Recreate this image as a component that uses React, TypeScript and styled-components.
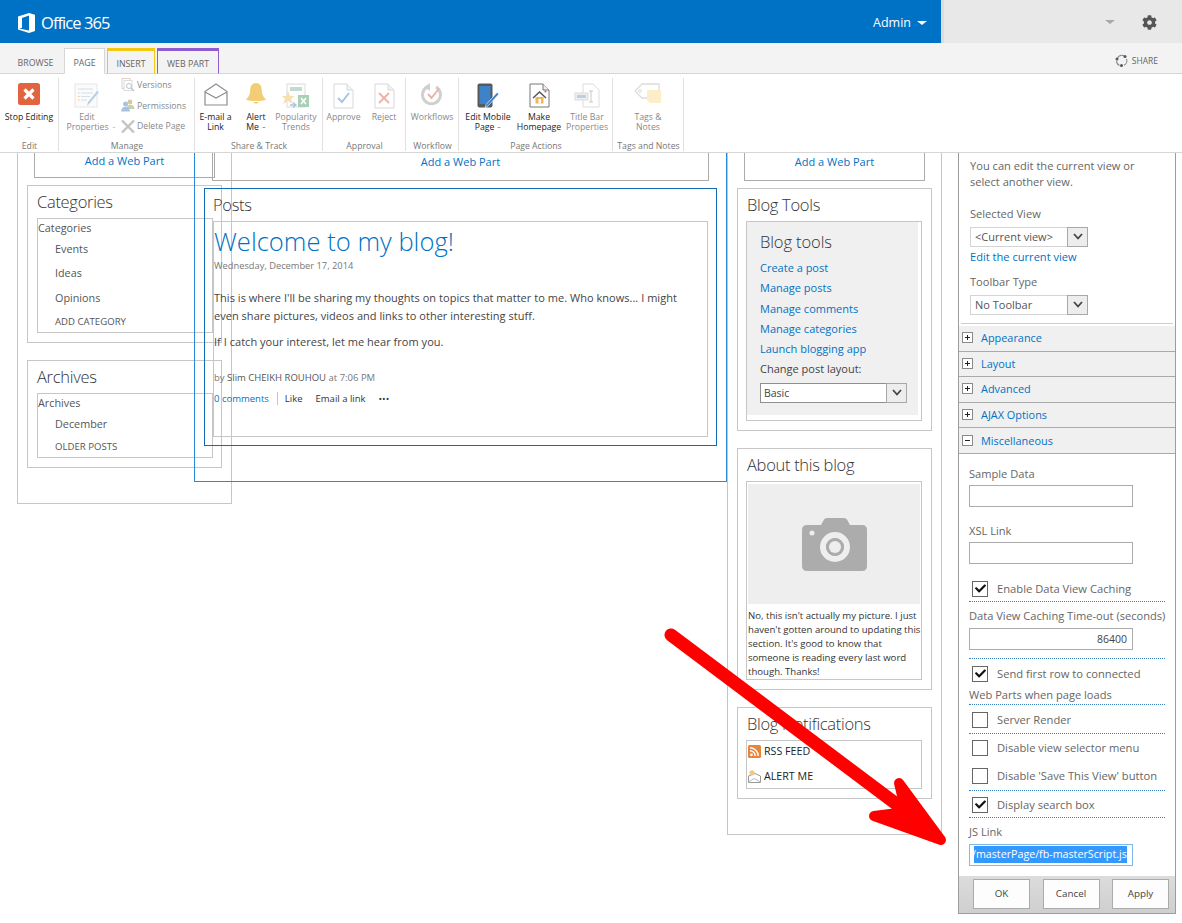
import React from "react";
import styled, { createGlobalStyle } from "styled-components";
import { FaCheck, FaCog } from "react-icons/fa";

const GlobalStyle = createGlobalStyle`
  html, body { margin: 0; padding: 0; background: #fff; }
  body { font-family: "Open Sans", "Noto Sans", "Liberation Sans", sans-serif; color: #444; }
  * { box-sizing: border-box; }
`;

const Screen = styled.div`
  position: relative;
  width: 1182px;
  height: 923px;
  overflow: hidden;
  background: #fff;
`;

/* suite bar */
const SuiteBar = styled.div`
  display: flex;
  height: 43px;
  background: #e8e8e8;
`;
const BrandArea = styled.div`
  width: 941px;
  display: flex;
  align-items: center;
  background: #0072c6;
  color: #fff;
  padding: 2px 0 0 18px;
`;
const BrandName = styled.span`
  margin-left: 6px;
  font-size: 16.5px;
  letter-spacing: -0.95px;
  font-weight: 400;
`;
const AdminName = styled.span`
  margin-left: auto;
  font-size: 12.5px;
  display: flex;
  align-items: center;
  gap: 6px;
  margin-right: 14px;
`;
const Caret = styled.i<{ $c: string; $w: number }>`
  display: block;
  width: 0;
  height: 0;
  border-left: ${(p) => p.$w}px solid transparent;
  border-right: ${(p) => p.$w}px solid transparent;
  border-top: ${(p) => p.$w - 1}px solid ${(p) => p.$c};
`;
const LabelCaret = styled(Caret)<{ $hang?: boolean }>`
  display: inline-block;
  margin-left: 3px;
  margin-right: ${(p) => (p.$hang ? -8 : 0)}px;
  vertical-align: middle;
`;
const BarStrip = styled.div`
  width: 3px;
  background: #dcdcdc;
`;
const SuiteRight = styled.div`
  flex: 1;
  display: flex;
  align-items: center;
  padding: 1px 0 0 161px;
  gap: 27px;
  color: #555;
`;

/* tabs */
const TabRow = styled.div`
  display: flex;
  align-items: flex-end;
  height: 31px;
  background: #f3f3f3;
  border-bottom: 1px solid #d6d6d6;
  padding-left: 12px;
  position: relative;
`;
const Tab = styled.div<{ $w: number; $accent?: string; $active?: boolean; $gap: number }>`
  width: ${(p) => p.$w}px;
  height: 26px;
  margin-right: ${(p) => p.$gap}px;
  margin-bottom: -1px;
  display: flex;
  align-items: center;
  justify-content: center;
  font-size: 8.8px;
  color: #666;
  padding-top: 3px;
  background: ${(p) => (p.$active ? "#fff" : "transparent")};
  border: 1px solid ${(p) => p.$accent ?? (p.$active ? "#d6d6d6" : "transparent")};
  border-top-width: ${(p) => (p.$accent ? 3 : 1)}px;
  border-bottom: ${(p) => (p.$active ? "1px solid #fff" : "1px solid #d6d6d6")};
`;
const ShareAction = styled.div`
  margin-left: auto;
  margin-right: 24px;
  height: 30px;
  display: flex;
  align-items: center;
  gap: 4px;
  padding-top: 5px;
  font-size: 8.5px;
  color: #666;
`;

/* ribbon */
const Ribbon = styled.div`
  display: flex;
  height: 79px;
  background: #fff;
  border-bottom: 1px solid #d6d6d6;
`;
const Group = styled.div<{ $w: number }>`
  width: ${(p) => p.$w}px;
  display: flex;
  flex-direction: column;
  position: relative;
  &::after {
    content: "";
    position: absolute;
    right: 0;
    top: 4px;
    bottom: 1px;
    width: 1px;
    background: #e1e1e1;
  }
`;
const GroupBody = styled.div`
  flex: 1;
  display: flex;
  min-height: 0;
`;
const Caption = styled.div`
  height: 12px;
  line-height: 12px;
  text-align: center;
  font-size: 8.7px;
  color: #777;
`;
const LargeButton = styled.div<{ $w: number; $off?: boolean }>`
  width: ${(p) => p.$w}px;
  flex: none;
  display: flex;
  flex-direction: column;
  align-items: center;
  padding-top: 9px;
  font-size: 8.7px;
  line-height: 9.5px;
  text-align: center;
  white-space: nowrap;
  color: ${(p) => (p.$off ? "#888" : "#222")};
`;
const IconSlot = styled.div`
  height: 30px;
  display: flex;
  align-items: flex-start;
  justify-content: center;
`;
const SmallStack = styled.div`
  margin-left: 6px;
  padding-top: 1px;
  display: flex;
  flex-direction: column;
`;
const SmallButton = styled.div`
  height: 20.5px;
  display: flex;
  align-items: center;
  gap: 2px;
  font-size: 8.7px;
  color: #888;
  white-space: nowrap;
`;

/* page */
const Workspace = styled.div`
  display: flex;
  align-items: flex-start;
  padding-left: 17px;
  height: 770px;
`;
const Zone = styled.div<{ $w: number; $line: string; $ml: number }>`
  width: ${(p) => p.$w}px;
  margin-left: ${(p) => p.$ml}px;
  flex: none;
  border: 1px solid ${(p) => p.$line};
  border-top: 0;
  padding-bottom: 35px;
`;
const AddPart = styled.div<{ $w: number; $ml: number; $h: number }>`
  width: ${(p) => p.$w}px;
  height: ${(p) => p.$h}px;
  margin-left: ${(p) => p.$ml}px;
  border: 1px solid #ababab;
  border-top: 0;
  text-align: center;
  font-size: 11px;
  line-height: ${(p) => p.$h - 10}px;
  color: #0072c6;
`;
const WebPart = styled.div<{ $mt: number; $ml: number }>`
  width: 195px;
  margin: ${(p) => p.$mt}px 0 0 ${(p) => p.$ml}px;
  border: 1px solid #c6c6c6;
  padding: 0 8px 9px 9px;
`;
const PartTitle = styled.div`
  height: 32px;
  line-height: 32px;
  font-size: 16.5px;
  letter-spacing: -0.3px;
  font-weight: 300;
  color: #333;
  white-space: nowrap;
`;
const PartBody = styled.div<{ $h?: number; $ml?: number }>`
  width: 176px;
  margin-left: ${(p) => p.$ml ?? 0}px;
  height: ${(p) => (p.$h ? `${p.$h}px` : "auto")};
  border: 1px solid #c6c6c6;
`;
const TreeRow = styled.div<{ $h: number; $indent?: boolean; $small?: boolean }>`
  height: ${(p) => p.$h}px;
  line-height: ${(p) => p.$h}px;
  padding-left: ${(p) => (p.$indent ? 17 : 0)}px;
  font-size: ${(p) => (p.$small ? 9.6 : 10.8)}px;
  color: #555;
  white-space: nowrap;
`;
const PostsPart = styled.div`
  width: 513px;
  margin: 7px 0 0 9px;
  border: 1px solid #0f6cb5;
  padding: 0 8px 8px;
`;
const PostBody = styled.div`
  width: 495px;
  height: 216px;
  border: 1px solid #c6c6c6;
`;
const PostTitle = styled.div`
  margin-top: 1px;
  height: 37px;
  line-height: 37px;
  font-size: 25.6px;
  font-weight: 300;
  color: #0072c6;
`;
const PostDate = styled.div`
  height: 12px;
  line-height: 12px;
  font-size: 9.3px;
  color: #777;
`;
const PostText = styled.p<{ $mt: number }>`
  margin: ${(p) => p.$mt}px 0 0;
  font-size: 11px;
  letter-spacing: 0.03px;
  line-height: 18px;
  color: #444;
  white-space: nowrap;
`;
const PostBy = styled.div`
  margin-top: 20px;
  line-height: 14px;
  font-size: 9.5px;
  color: #777;
`;
const NameLink = styled.span`
  color: #555;
`;
const PostActions = styled.div`
  margin-top: 5px;
  height: 16px;
  display: flex;
  align-items: center;
  font-size: 9.5px;
  color: #333;
`;
const CommentLink = styled.span`
  color: #0072c6;
  padding-right: 8px;
  margin-right: 7px;
  border-right: 1px solid #c6c6c6;
`;
const ActionLink = styled.span<{ $ml?: number }>`
  margin-left: ${(p) => p.$ml ?? 0}px;
`;

const ToolsBox = styled.div`
  height: 193px;
  margin-right: 3px;
  background: #f0f0f0;
  padding: 0 0 0 13px;
`;
const ToolsTitle = styled.div`
  height: 36px;
  line-height: 40px;
  font-size: 16.5px;
  letter-spacing: -0.1px;
  font-weight: 300;
  color: #333;
`;
const ToolLink = styled.div<{ $dark?: boolean }>`
  height: 20.3px;
  line-height: 20px;
  font-size: 11px;
  color: ${(p) => (p.$dark ? "#444" : "#0072c6")};
`;
const ToolSelect = styled.div`
  margin-top: 3px;
  width: 147px;
  height: 20px;
  display: flex;
  align-items: center;
  background: #fff;
  border: 1px solid #909090;
  padding-left: 3px;
  font-size: 10.5px;
  color: #444;
`;
const SelectValue = styled.span`
  flex: 1;
`;
const PictureBox = styled.div`
  margin: 2px 1px 5px;
  width: 172px;
  height: 120px;
  background: #eee;
  display: flex;
  align-items: center;
  justify-content: center;
`;
const PictureText = styled.div`
  padding-left: 1px;
  font-size: 9.6px;
  line-height: 14px;
  color: #333;
  white-space: nowrap;
`;
const NoticeRow = styled.div<{ $mt: number }>`
  display: flex;
  align-items: center;
  gap: 3px;
  height: 20px;
  margin-top: ${(p) => p.$mt}px;
  padding-left: 1px;
  font-size: 10.7px;
  color: #222;
`;
const NoticeList = styled.div`
  padding-bottom: 2px;
`;

/* tool pane */
const ToolPane = styled.div`
  width: 218px;
  margin-left: 16px;
  flex: none;
  border: 1px solid #9c9c9c;
  border-top: 0;
  background: #fff;
`;
const PaneIntro = styled.div`
  padding: 5px 0 0 11px;
`;
const PaneLine = styled.div<{ $mt?: number; $ml?: number; $link?: boolean }>`
  margin-top: ${(p) => p.$mt ?? 0}px;
  margin-left: ${(p) => p.$ml ?? 0}px;
  height: 16px;
  line-height: 16px;
  font-size: 11.1px;
  color: ${(p) => (p.$link ? "#0072c6" : "#666")};
  white-space: nowrap;
`;
const PaneSelect = styled.div<{ $mt: number }>`
  margin-top: ${(p) => p.$mt}px;
  width: 118px;
  height: 20px;
  display: flex;
  align-items: center;
  justify-content: space-between;
  padding: 0 0 1px 4px;
  border: 1px solid #d4d4d4;
  font-size: 11px;
  color: #555;
`;
const SelectButton = styled.span`
  width: 21px;
  height: 20px;
  margin: -1px -1px -1px 0;
  display: flex;
  align-items: center;
  justify-content: center;
  background: #ededed;
  border: 1px solid #a8a8a8;
`;
const PaneRule = styled.div`
  margin: 8px 2px 2px;
  height: 1px;
  background: #cfcfcf;
`;
const SectionRow = styled.div`
  height: 25.6px;
  display: flex;
  align-items: center;
  padding: 0 0 1px 3px;
  gap: 8px;
  background: #f0f0f0;
  border-bottom: 1px solid #a9a9a9;
  font-size: 10.9px;
  color: #0072c6;
`;
const ToggleBox = styled.span`
  width: 11px;
  height: 11px;
  border: 1px solid #8a8a8a;
  background: #fff;
  position: relative;
  &::before {
    content: "";
    position: absolute;
    left: 2px;
    right: 2px;
    top: 4px;
    height: 1px;
    background: #222;
  }
`;
const PlusBox = styled(ToggleBox)`
  &::after {
    content: "";
    position: absolute;
    top: 2px;
    bottom: 2px;
    left: 4px;
    width: 1px;
    background: #222;
  }
`;
const PaneForm = styled.div`
  padding-left: 10px;
`;
const TextField = styled.div<{ $mt: number }>`
  margin-top: ${(p) => p.$mt}px;
  width: 164px;
  height: 22px;
  border: 1px solid #ababab;
  text-align: right;
  padding-right: 5px;
  font-size: 10.5px;
  line-height: 20px;
  color: #444;
`;
const CheckRow = styled.div<{ $mt: number }>`
  margin: ${(p) => p.$mt}px 0 0 3px;
  height: 16px;
  display: flex;
  align-items: center;
  gap: 9px;
  font-size: 11.2px;
  color: #666;
  white-space: nowrap;
`;
const CheckBox = styled.span`
  flex: none;
  width: 16px;
  height: 16px;
  border: 1px solid #666;
  display: flex;
  align-items: center;
  justify-content: center;
  color: #111;
`;
const Dotted = styled.div<{ $mt: number }>`
  margin-top: ${(p) => p.$mt}px;
  width: 196px;
  border-top: 1px dotted #3a7fc0;
`;
const LinkField = styled.div`
  margin-top: 4px;
  width: 164px;
  height: 22px;
  border: 1px solid #7db9ea;
  padding: 1px 0 0 4px;
`;
const SelectedText = styled.span`
  display: block;
  width: 153px;
  height: 17px;
  line-height: 17px;
  overflow: hidden;
  white-space: nowrap;
  text-indent: -2px;
  background: #3399ff;
  color: #fff;
  font-size: 10.7px;
`;
const PaneFooter = styled.div`
  margin-top: 10px;
  height: 37px;
  display: flex;
  gap: 12.5px;
  padding: 3px 0 0 14px;
  background: linear-gradient(#dcdcdc, #cfcfcf);
`;
const FooterButton = styled.div`
  width: 57px;
  height: 30px;
  display: flex;
  align-items: center;
  justify-content: center;
  background: #fdfdfd;
  border: 1px solid #ababab;
  font-size: 9.8px;
  color: #444;
`;

const ArrowLayer = styled.svg`
  position: absolute;
  left: 0;
  top: 0;
  pointer-events: none;
`;

const Chevron = () => (
  <svg width="10" height="7" viewBox="0 0 10 7">
    <path d="M1 1 L5 5.5 L9 1" fill="none" stroke="#444" strokeWidth="1.8" />
  </svg>
);

const OfficeLogo = () => (
  <svg width="17" height="20" viewBox="0 0 17 20">
    <path
      fillRule="evenodd"
      fill="#fff"
      d="M0 3.6 L11 0 L17 1.7 V18 L11 20 L0 16.4 Z M4 5 V14.8 L1.2 15.6 L11 17.6 V2.6 Z"
    />
  </svg>
);

const ShareIcon = () => (
  <svg width="13" height="13" viewBox="0 0 13 13">
    <path d="M2.5 4 A5 5 0 0 1 9 1.8 M11.5 5 A5 5 0 0 1 9 11.3 M4.5 11.6 A5 5 0 0 1 1.6 7" fill="none" stroke="#8a8a8a" strokeWidth="1.1" />
    <circle cx="10" cy="2.6" r="1.5" fill="#555" />
    <circle cx="2" cy="5" r="1.5" fill="#555" />
    <circle cx="6.5" cy="11.5" r="1.5" fill="#555" />
  </svg>
);

const StopIcon = () => (
  <svg width="22" height="22" viewBox="0 0 22 22">
    <rect width="22" height="22" rx="2.5" fill="#e2633f" />
    <path d="M6.5 6.5 L15.5 15.5 M15.5 6.5 L6.5 15.5" stroke="#fff" strokeWidth="3.2" />
  </svg>
);

const PropsIcon = () => (
  <svg width="27" height="26" viewBox="0 0 27 26">
    <rect x="1" y="1" width="22" height="23" fill="#fbfbfb" stroke="#e6e6e6" />
    <path d="M4 6 H19 M7 10 H19 M7 13.5 H16 M7 17 H13" stroke="#d6dee6" strokeWidth="1.2" />
    <path d="M4 10 H5.5 M4 13.5 H5.5 M4 17 H5.5" stroke="#e8c98f" strokeWidth="1.2" />
    <path d="M25 9 L16 20 L13 23 L14 19 L23 8 Z" fill="#b8d0e8" />
  </svg>
);

const VersionsIcon = () => (
  <svg width="14" height="14" viewBox="0 0 14 14">
    <rect x="1" y="0.5" width="8" height="10" fill="#fff" stroke="#e6cfc4" />
    <rect x="3" y="2.5" width="8" height="10" fill="#fff" stroke="#dcdcdc" />
    <circle cx="8" cy="8" r="2.5" fill="none" stroke="#b5c5d2" />
    <path d="M10 10 L13 13" stroke="#b5c5d2" strokeWidth="1.3" />
  </svg>
);

const PeopleIcon = () => (
  <svg width="14" height="13" viewBox="0 0 14 13">
    <circle cx="9" cy="3" r="2.4" fill="#d6c9a2" />
    <path d="M5.5 10 Q6 5.8 9 5.8 Q13 5.8 13.5 10 Z" fill="#c8d2a8" />
    <circle cx="4.6" cy="5" r="2.5" fill="#a8c3e0" />
    <path d="M0 12.5 Q.5 7.8 4.6 7.8 Q8.5 7.8 9 12.5 Z" fill="#a8c3e0" />
  </svg>
);

const DeleteIcon = () => (
  <svg width="14" height="13" viewBox="0 0 14 13">
    <path d="M1 0.5 L13 12.5 M13 0.5 L1 12.5" stroke="#c4c4c4" strokeWidth="2.4" />
  </svg>
);

const MailIcon = () => (
  <svg width="24" height="23" viewBox="0 0 24 23">
    <path d="M1 8.5 L12 1 L23 8.5 V22 H1 Z" fill="#fff" stroke="#8d8d8d" strokeWidth="1.2" />
    <path d="M1 9 L12 15 L23 9" fill="none" stroke="#8d8d8d" strokeWidth="1.1" />
  </svg>
);

const BellIcon = () => (
  <svg width="22" height="22" viewBox="0 0 22 22">
    <path d="M11 0 C7 0 5.5 3 5.2 7 C5 12 3.5 14 1 16.5 C4 18.5 18 18.5 21 16.5 C18.5 14 17 12 16.8 7 C16.5 3 15 0 11 0 Z" fill="#f3cd76" />
    <path d="M8 19 Q11 22.5 14 19 Z" fill="#f3cd76" />
  </svg>
);

const TrendsIcon = () => (
  <svg width="28" height="26" viewBox="0 0 28 26">
    <rect x="5" y="1" width="18" height="23" fill="#fdfdfd" stroke="#dcdcdc" />
    <rect x="8" y="4" width="12" height="4" fill="#bfdccd" />
    <path d="M6 8 L8 13 L13 13 L9 16 L11 21 L6 18 L1 21 L3 16 L0 13 L4 13 Z" fill="#f6e0b0" />
    <rect x="16" y="12" width="11" height="12" fill="#a9cfb6" />
    <path d="M19 15 L24 21 M24 15 L19 21" stroke="#fff" strokeWidth="1.6" />
    <path d="M8 22 H13 M11 19.5 L14 22 L11 24.5" fill="none" stroke="#a8c4e0" strokeWidth="1.3" />
  </svg>
);

const DocIcon = ({ children }: { children: React.ReactNode }) => (
  <svg width="21" height="26" viewBox="0 0 21 26">
    <path d="M1 1 H14 L20 7 V25 H1 Z" fill="#fff" stroke="#d8d8d8" />
    <path d="M14 1 V7 H20" fill="#f2f2f2" stroke="#d8d8d8" />
    {children}
  </svg>
);

const WorkflowIcon = () => (
  <svg width="22" height="23" viewBox="0 0 22 23">
    <path d="M6 4 A9 9 0 1 0 15 4" fill="none" stroke="#d0d0d0" strokeWidth="3" />
    <path d="M9 0 L9 8 L3 4 Z" fill="#d0d0d0" />
    <path d="M7 11 L10.5 15 L18 5.5" fill="none" stroke="#eeb3a5" strokeWidth="2" />
  </svg>
);

const MobileIcon = () => (
  <svg width="23" height="26" viewBox="0 0 23 26">
    <rect x="0.5" y="0.5" width="15" height="24" rx="2" fill="#58595b" />
    <rect x="2.5" y="3" width="11" height="18" fill="#3e83c9" />
    <path d="M22 11 L11 23 L8 25 L9 21.5 L20 9.5 Z" fill="#3e83c9" stroke="#fff" strokeWidth="0.6" />
  </svg>
);

const HomeDocIcon = () => (
  <svg width="21" height="25" viewBox="0 0 21 25">
    <path d="M1 1 H14 L20 7 V24 H1 Z" fill="#fff" stroke="#777" />
    <path d="M14 1 V7 H20" fill="#eee" stroke="#777" />
    <path d="M4 15 L10.5 9 L17 15" fill="none" stroke="#555" strokeWidth="1.4" />
    <rect x="6.5" y="14" width="8" height="6.5" fill="#efb65a" />
    <rect x="9.5" y="16" width="2.5" height="4.5" fill="#fff" />
    <circle cx="16.5" cy="8.5" r="1.1" fill="#e2633f" />
  </svg>
);

const TitleBarIcon = () => (
  <svg width="26" height="25" viewBox="0 0 26 25">
    <path d="M9 1 H19 L25 7 V24 H9 Z" fill="#fff" stroke="#dcdcdc" />
    <rect x="1" y="10" width="13" height="7" fill="#eee" stroke="#dcdcdc" />
    <rect x="3" y="12" width="9" height="3" fill="#bcd0e6" />
    <path d="M15 8 H19 M17 8 V19 M15 19 H19" stroke="#c8c8c8" fill="none" />
  </svg>
);

const TagsIcon = () => (
  <svg width="28" height="21" viewBox="0 0 28 21">
    <path d="M1 8 L8 1 H25 V7 M14 15 H8 L1 8" fill="#fff" stroke="#dcdcdc" strokeWidth="1.3" />
    <circle cx="6" cy="8" r="1.4" fill="none" stroke="#dcdcdc" />
    <path d="M13 7 H27 V20 H16 L13 17 Z" fill="#fbeec9" />
  </svg>
);

const CameraIcon = () => (
  <svg width="65" height="53" viewBox="0 0 65 53">
    <path
      fillRule="evenodd"
      fill="#acacac"
      d="M5 7 H19 L22 1.5 Q23 0 25 0 H42 Q44 0 45 1.5 L48 7 H60 Q65 7 65 12 V48 Q65 53 60 53 H5 Q0 53 0 48 V12 Q0 7 5 7 Z M33 14 A15 15 0 1 0 33 44 A15 15 0 1 0 33 14 Z M33 20 A9 9 0 1 1 33 38 A9 9 0 1 1 33 20 Z"
    />
    <circle cx="33" cy="29" r="9" fill="#acacac" />
    <circle cx="33" cy="29" r="6" fill="#eee" />
    <circle cx="10" cy="15" r="2.5" fill="#eee" />
  </svg>
);

const RssIcon = () => (
  <svg width="13" height="13" viewBox="0 0 13 13">
    <rect width="13" height="13" rx="1.5" fill="#e8853a" />
    <circle cx="3.4" cy="9.8" r="1.4" fill="#fff" />
    <path d="M2 5.8 A5.2 5.2 0 0 1 7.2 11 M2 2.8 A8.2 8.2 0 0 1 10.2 11" fill="none" stroke="#fff" strokeWidth="1.5" />
  </svg>
);

const AlertIcon = () => (
  <svg width="13" height="13" viewBox="0 0 13 13">
    <path d="M0.5 6 L7 3.5 L12.5 6 V12.5 H0.5 Z" fill="#fff" stroke="#999" />
    <path d="M0.5 12 L6 8.5 L12.5 12" fill="none" stroke="#bbb" />
    <circle cx="4" cy="2.8" r="2.6" fill="#efc987" />
  </svg>
);

const Tick = () => <FaCheck size={11} />;

type TreeItem = { label: string; h: number; indent?: boolean; small?: boolean };

const categories: TreeItem[] = [
  { label: "Categories", h: 18 },
  { label: "Events", h: 24, indent: true },
  { label: "Ideas", h: 24, indent: true },
  { label: "Opinions", h: 26, indent: true },
  { label: "ADD CATEGORY", h: 21, indent: true, small: true },
];
const archives: TreeItem[] = [
  { label: "Archives", h: 18 },
  { label: "December", h: 24, indent: true },
  { label: "OLDER POSTS", h: 21, indent: true, small: true },
];

const Tree = ({ items }: { items: TreeItem[] }) => (
  <PartBody>
    {items.map((i) => (
      <TreeRow key={i.label} $h={i.h} $indent={i.indent} $small={i.small}>
        {i.label}
      </TreeRow>
    ))}
  </PartBody>
);

const sections = ["Appearance", "Layout", "Advanced", "AJAX Options"];
const toolLinks = ["Create a post", "Manage posts", "Manage comments", "Manage categories", "Launch blogging app"];

export default function App() {
  return (
    <Screen>
      <GlobalStyle />
      <SuiteBar>
        <BrandArea>
          <OfficeLogo />
          <BrandName>Office 365</BrandName>
          <AdminName>
            Admin <Caret $c="#fff" $w={5} />
          </AdminName>
        </BrandArea>
        <BarStrip />
        <SuiteRight>
          <Caret $c="#a8a8a8" $w={5} />
          <FaCog size={15} />
        </SuiteRight>
      </SuiteBar>

      <TabRow>
        <Tab $w={47} $gap={5}>BROWSE</Tab>
        <Tab $w={41} $gap={2} $active>PAGE</Tab>
        <Tab $w={48} $gap={2} $accent="#f2c811">INSERT</Tab>
        <Tab $w={62} $gap={0} $accent="#8e5bd0">WEB PART</Tab>
        <ShareAction>
          <ShareIcon /> SHARE
        </ShareAction>
      </TabRow>

      <Ribbon>
        <Group $w={59}>
          <GroupBody>
            <LargeButton $w={58}>
              <IconSlot><StopIcon /></IconSlot>
              Stop Editing
              <Caret $c="#777" $w={2.5} style={{ marginTop: 4 }} />
            </LargeButton>
          </GroupBody>
          <Caption>Edit</Caption>
        </Group>
        <Group $w={136}>
          <GroupBody>
            <LargeButton $w={56} $off>
              <IconSlot><PropsIcon /></IconSlot>
              <span>
                Edit
                <br />
                Properties<LabelCaret $c="#bbb" $w={2.5} $hang />
              </span>
            </LargeButton>
            <SmallStack>
              <SmallButton><VersionsIcon /> Versions</SmallButton>
              <SmallButton><PeopleIcon /> Permissions</SmallButton>
              <SmallButton><DeleteIcon /> Delete Page</SmallButton>
            </SmallStack>
          </GroupBody>
          <Caption>Manage</Caption>
        </Group>
        <Group $w={128}>
          <GroupBody>
            <LargeButton $w={41}>
              <IconSlot><MailIcon /></IconSlot>
              <span>
                E-mail a
                <br />
                Link
              </span>
            </LargeButton>
            <LargeButton $w={40}>
              <IconSlot><BellIcon /></IconSlot>
              <span>
                Alert
                <br />
                Me<LabelCaret $c="#777" $w={2.5} />
              </span>
            </LargeButton>
            <LargeButton $w={40} $off>
              <IconSlot><TrendsIcon /></IconSlot>
              <span>
                Popularity
                <br />
                Trends
              </span>
            </LargeButton>
          </GroupBody>
          <Caption>Share &amp; Track</Caption>
        </Group>
        <Group $w={83}>
          <GroupBody>
            <LargeButton $w={41} $off>
              <IconSlot>
                <DocIcon><path d="M5 15 L9 19 L16 10" fill="none" stroke="#a5c5e6" strokeWidth="2" /></DocIcon>
              </IconSlot>
              Approve
            </LargeButton>
            <LargeButton $w={40} $off>
              <IconSlot>
                <DocIcon><path d="M5 10 L15 20 M15 10 L5 20" stroke="#efb1a4" strokeWidth="1.8" /></DocIcon>
              </IconSlot>
              Reject
            </LargeButton>
          </GroupBody>
          <Caption>Approval</Caption>
        </Group>
        <Group $w={53}>
          <GroupBody>
            <LargeButton $w={52} $off>
              <IconSlot><WorkflowIcon /></IconSlot>
              Workflows
            </LargeButton>
          </GroupBody>
          <Caption>Workflow</Caption>
        </Group>
        <Group $w={154}>
          <GroupBody>
            <LargeButton $w={58}>
              <IconSlot><MobileIcon /></IconSlot>
              <span>
                Edit Mobile
                <br />
                Page<LabelCaret $c="#777" $w={2.5} />
              </span>
            </LargeButton>
            <LargeButton $w={44}>
              <IconSlot><HomeDocIcon /></IconSlot>
              <span>
                Make
                <br />
                Homepage
              </span>
            </LargeButton>
            <LargeButton $w={52} $off>
              <IconSlot><TitleBarIcon /></IconSlot>
              <span>
                Title Bar
                <br />
                Properties
              </span>
            </LargeButton>
          </GroupBody>
          <Caption>Page Actions</Caption>
        </Group>
        <Group $w={71}>
          <GroupBody>
            <LargeButton $w={70} $off>
              <IconSlot><TagsIcon /></IconSlot>
              <span>
                Tags &amp;
                <br />
                Notes
              </span>
            </LargeButton>
          </GroupBody>
          <Caption>Tags and Notes</Caption>
        </Group>
      </Ribbon>

      <Workspace>
        <Zone $w={215} $ml={0} $line="#c6c6c6">
          <AddPart $w={181} $ml={16} $h={25}>Add a Web Part</AddPart>
          <WebPart $mt={7} $ml={9}>
            <PartTitle>Categories</PartTitle>
            <Tree items={categories} />
          </WebPart>
          <WebPart $mt={17} $ml={9}>
            <PartTitle>Archives</PartTitle>
            <Tree items={archives} />
          </WebPart>
        </Zone>

        <Zone $w={533} $ml={-38} $line="#2b88d8">
          <AddPart $w={497} $ml={17} $h={28}>Add a Web Part</AddPart>
          <PostsPart>
            <PartTitle>Posts</PartTitle>
            <PostBody>
              <PostTitle>Welcome to my blog!</PostTitle>
              <PostDate>Wednesday, December 17, 2014</PostDate>
              <PostText $mt={17}>
                This is where I'll be sharing my thoughts on topics that matter to me. Who knows... I might
                <br />
                even share pictures, videos and links to other interesting stuff.
              </PostText>
              <PostText $mt={8}>If I catch your interest, let me hear from you.</PostText>
              <PostBy>by <NameLink>Slim CHEIKH ROUHOU</NameLink> at 7:06 PM</PostBy>
              <PostActions>
                <CommentLink>0 comments</CommentLink>
                <ActionLink>Like</ActionLink>
                <ActionLink $ml={13}>Email a link</ActionLink>
                <ActionLink $ml={13}>•••</ActionLink>
              </PostActions>
            </PostBody>
          </PostsPart>
        </Zone>

        <Zone $w={215} $ml={0} $line="#c6c6c6">
          <AddPart $w={181} $ml={16} $h={28}>Add a Web Part</AddPart>
          <WebPart $mt={7} $ml={9}>
            <PartTitle>Blog Tools</PartTitle>
            <PartBody $h={200} $ml={-1}>
              <ToolsBox>
                <ToolsTitle>Blog tools</ToolsTitle>
                {toolLinks.map((l) => (
                  <ToolLink key={l}>{l}</ToolLink>
                ))}
                <ToolLink $dark>Change post layout:</ToolLink>
                <ToolSelect>
                  <SelectValue>Basic</SelectValue>
                  <SelectButton><Chevron /></SelectButton>
                </ToolSelect>
              </ToolsBox>
            </PartBody>
          </WebPart>
          <WebPart $mt={17} $ml={9}>
            <PartTitle>About this blog</PartTitle>
            <PartBody $ml={-1}>
              <PictureBox><CameraIcon /></PictureBox>
              <PictureText>
                No, this isn't actually my picture. I just
                <br />
                haven't gotten around to updating this
                <br />
                section. It's good to know that
                <br />
                someone is reading every last word
                <br />
                though. Thanks!
              </PictureText>
            </PartBody>
          </WebPart>
          <WebPart $mt={17} $ml={9}>
            <PartTitle>Blog Notifications</PartTitle>
            <PartBody $ml={-1}>
              <NoticeList>
                <NoticeRow $mt={0}><RssIcon /> RSS FEED</NoticeRow>
                <NoticeRow $mt={5}><AlertIcon /> ALERT ME</NoticeRow>
              </NoticeList>
            </PartBody>
          </WebPart>
        </Zone>

        <ToolPane>
          <PaneIntro>
            <PaneLine>You can edit the current view or</PaneLine>
            <PaneLine>select another view.</PaneLine>
            <PaneLine $mt={16}>Selected View</PaneLine>
            <PaneSelect $mt={5}>
              &lt;Current view&gt;
              <SelectButton><Chevron /></SelectButton>
            </PaneSelect>
            <PaneLine $mt={2} $link>Edit the current view</PaneLine>
            <PaneLine $mt={9}>Toolbar Type</PaneLine>
            <PaneSelect $mt={5}>
              No Toolbar
              <SelectButton><Chevron /></SelectButton>
            </PaneSelect>
          </PaneIntro>
          <PaneRule />
          {sections.map((s) => (
            <SectionRow key={s}><PlusBox /> {s}</SectionRow>
          ))}
          <SectionRow><ToggleBox /> Miscellaneous</SectionRow>
          <PaneForm>
            <PaneLine $mt={12}>Sample Data</PaneLine>
            <TextField $mt={3} />
            <PaneLine $mt={16}>XSL Link</PaneLine>
            <TextField $mt={3} />
            <CheckRow $mt={17}><CheckBox><Tick /></CheckBox> Enable Data View Caching</CheckRow>
            <Dotted $mt={4} />
            <PaneLine $mt={6}>Data View Caching Time-out (seconds)</PaneLine>
            <TextField $mt={4}>86400</TextField>
            <Dotted $mt={8} />
            <CheckRow $mt={7}><CheckBox><Tick /></CheckBox> Send first row to connected</CheckRow>
            <PaneLine $mt={5}>Web Parts when page loads</PaneLine>
            <Dotted $mt={1} />
            <CheckRow $mt={7}><CheckBox /> Server Render</CheckRow>
            <Dotted $mt={5} />
            <CheckRow $mt={6}><CheckBox /> Disable view selector menu</CheckRow>
            <CheckRow $mt={12}><CheckBox /> Disable 'Save This View' button</CheckRow>
            <Dotted $mt={6} />
            <CheckRow $mt={6}><CheckBox><Tick /></CheckBox> Display search box</CheckRow>
            <Dotted $mt={4} />
            <PaneLine $mt={6}>JS Link</PaneLine>
            <LinkField>
              <SelectedText>/masterPage/fb-masterScript.js</SelectedText>
            </LinkField>
          </PaneForm>
          <PaneFooter>
            <FooterButton>OK</FooterButton>
            <FooterButton>Cancel</FooterButton>
            <FooterButton>Apply</FooterButton>
          </PaneFooter>
        </ToolPane>
      </Workspace>

      <ArrowLayer width="1182" height="923" viewBox="0 0 1182 923">
        <path d="M671 635 L915 818" stroke="#fe0000" strokeWidth="13" strokeLinecap="round" />
        <path
          d="M899 783 L941 840 L874 816 L906 812 Z"
          fill="#fe0000"
          stroke="#fe0000"
          strokeWidth="10"
          strokeLinejoin="round"
        />
      </ArrowLayer>
    </Screen>
  );
}
